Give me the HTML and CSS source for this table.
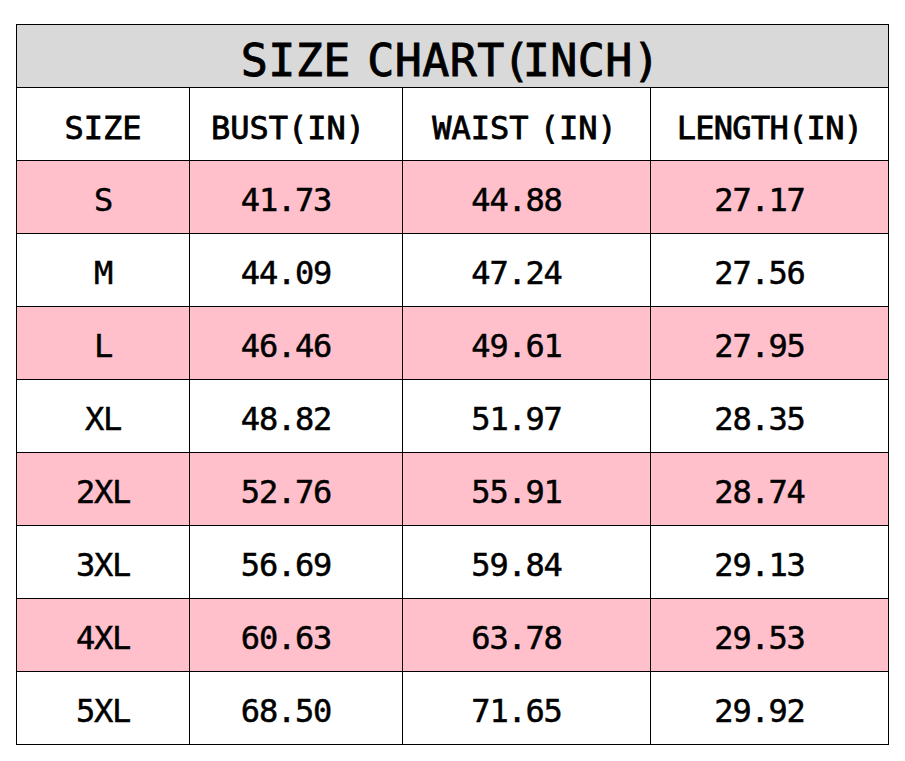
FILE: index.html
```html
<!DOCTYPE html>
<html>
<head>
<meta charset="utf-8">
<link rel="stylesheet" href="styles.css">
</head>
<body>
<div class="chart">
  <div class="title">SIZE CHART<span class="open">(</span>INCH<span class="close">)</span></div>
  <div class="cell head">SIZE</div>
  <div class="cell head bust">BUST(IN)</div>
  <div class="cell head waist">WAIST (IN)</div>
  <div class="cell head length">LENGTH(IN)</div>

  <div class="cell pink">S</div><div class="cell num pink">41.73</div><div class="cell num pink">44.88</div><div class="cell num pink">27.17</div>
  <div class="cell">M</div><div class="cell num">44.09</div><div class="cell num">47.24</div><div class="cell num">27.56</div>
  <div class="cell pink">L</div><div class="cell num pink">46.46</div><div class="cell num pink">49.61</div><div class="cell num pink">27.95</div>
  <div class="cell">XL</div><div class="cell num">48.82</div><div class="cell num">51.97</div><div class="cell num">28.35</div>
  <div class="cell pink">2XL</div><div class="cell num pink">52.76</div><div class="cell num pink">55.91</div><div class="cell num pink">28.74</div>
  <div class="cell">3XL</div><div class="cell num">56.69</div><div class="cell num">59.84</div><div class="cell num">29.13</div>
  <div class="cell pink">4XL</div><div class="cell num pink">60.63</div><div class="cell num pink">63.78</div><div class="cell num pink">29.53</div>
  <div class="cell">5XL</div><div class="cell num">68.50</div><div class="cell num">71.65</div><div class="cell num">29.92</div>
</div>
</body>
</html>
```
FILE: styles.css
```css
html, body {
  margin: 0;
  padding: 0;
  background: #fff;
}
body {
  padding: 24px 16px;
  font-family: "DejaVu Sans Mono", "Liberation Mono", monospace;
  color: #000;
}
.chart {
  width: 873px;
  box-sizing: border-box;
  background: #000;
  padding: 1px;
  display: grid;
  grid-template-columns: 172px 212px 247px 237px;
  grid-template-rows: 62px repeat(9, 72px);
  gap: 1px;
}
.title {
  grid-column: 1 / -1;
  background: #d9d9d9;
  display: flex;
  align-items: center;
  justify-content: center;
  white-space: pre;
  font-size: 45px;
  letter-spacing: 0.4px;
  word-spacing: -11px;
  padding-top: 8px;
  padding-right: 4px;
  box-sizing: border-box;
  -webkit-text-stroke: 0.9px #000;
}
.title .open {
  margin-left: -2px;
  letter-spacing: -7px;
}
.title .close {
  margin-left: 0;
}
.cell {
  background: #fff;
  display: flex;
  align-items: center;
  justify-content: center;
  white-space: pre;
  font-size: 32px;
  letter-spacing: -1.2px;
  padding-top: 5px;
  box-sizing: border-box;
  -webkit-text-stroke: 0.5px #000;
}
.cell.num {
  padding-right: 20px;
}
.cell.head {
  letter-spacing: 0px;
  padding-top: 7px;
  -webkit-text-stroke: 0.8px #000;
}
.cell.bust {
  padding-right: 16px;
}
.cell.waist {
  word-spacing: -8px;
  padding-right: 4px;
}
.cell.length {
  letter-spacing: -0.7px;
}
.cell.pink {
  background: #ffc0cb;
}
```
